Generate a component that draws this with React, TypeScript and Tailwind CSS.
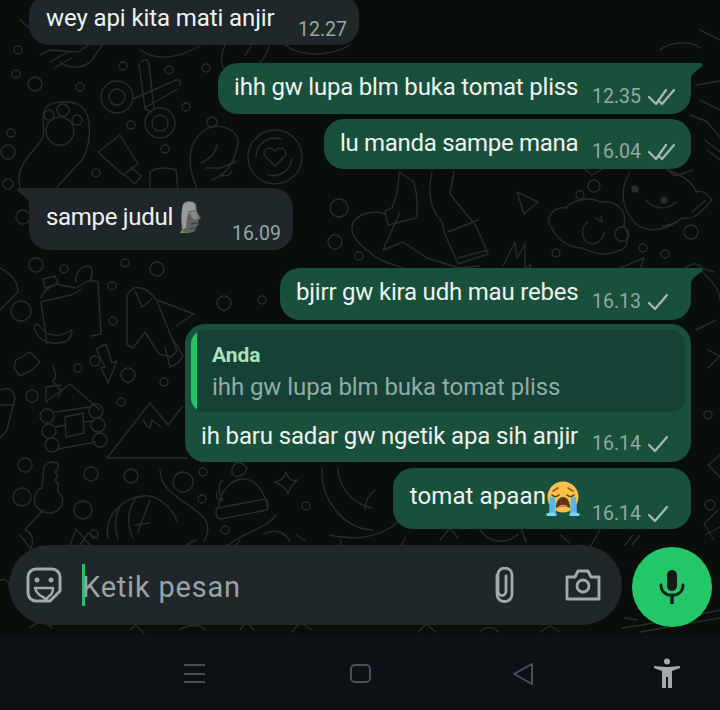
import React from 'react'

const dots: [number, number, number][] = [
  [18, 50, 4], [16, 74, 4], [35, 84, 7], [80, 87, 4], [123, 66, 4], [169, 70, 4], [206, 68, 4], [186, 107, 4],
  [131, 125, 4], [212, 122, 5], [165, 149, 4], [96, 173, 4], [11, 133, 4], [8, 152, 7], [8, 184, 5], [23, 217, 7],
  [36, 265, 7], [64, 269, 4], [125, 263, 4], [157, 269, 7], [112, 286, 4], [21, 311, 10], [113, 321, 4], [224, 303, 7],
  [262, 300, 4], [78, 368, 4], [128, 375, 7], [95, 361, 5], [164, 382, 4], [32, 396, 6], [121, 402, 4], [22, 497, 9],
  [25, 465, 7], [91, 474, 7], [131, 476, 7], [83, 510, 9], [94, 534, 4], [203, 472, 4], [183, 482, 10], [202, 499, 4],
  [306, 506, 4], [225, 530, 4], [339, 208, 9], [335, 242, 7], [359, 256, 4], [580, 195, 4], [594, 186, 6], [622, 234, 7],
  [556, 253, 4], [643, 248, 4], [691, 232, 7], [665, 254, 4], [710, 505, 5], [708, 415, 4],
]

// faint line drawings behind the chat
function Doodles() {
  return (
    <svg className="absolute left-0 top-0" width="720" height="635" viewBox="0 0 720 635" fill="none" stroke="#292d2a" strokeWidth="1.4" strokeLinecap="round" strokeLinejoin="round">
      {dots.map(([x, y, r], i) => <circle key={i} cx={x} cy={y} r={r} />)}
      {/* scissors */}
      <circle cx="117" cy="97" r="16" /><circle cx="117" cy="97" r="8" />
      <circle cx="160" cy="123" r="15" /><circle cx="160" cy="123" r="8" />
      <path d="M141 62c4-4 8-2 8 3l5 44M139 64l6 45 6 3M180 85c2-5-2-6-6-4l-41 18M178 89l-32 18" />
      {/* paw */}
      <circle cx="60" cy="131" r="14" /><circle cx="49" cy="115" r="5" /><circle cx="63" cy="110" r="6" /><circle cx="77" cy="120" r="5" />
      <path d="M20 187c-6-24 18-38 23-50 2-12-2-20 2-28 5-8 24-10 36-3 12 10 10 36 2 53l-26 28" />
      {/* tube */}
      <path d="M98 152l22-17 18 29-15 11zM125 175l10 9 6-8-10-9" />
      {/* head with glasses */}
      <path d="M198 190c-10-20-14-48 10-62 18-6 32 6 30 16 -4 18-10 30-26 36M217 145c-2 10-8 14-16 18M206 168h14l16-6M220 175c6 2 10 0 12-4" />
      <path d="M150 190v-18c8-6 20-4 26-2l2 20" />
      {/* coffee */}
      <circle cx="275" cy="157" r="27" />
      <path d="M256 156a19 19 0 0 1 25-17M292 158a19 19 0 0 1-24 17M275 166l-10-10c-4-6 5-11 10-5 5-6 14-1 10 5z" />
      <path d="M40 55l10-5 28 2 22-15-20-5M60 62c10 8 25 6 32-2l12-18M50 62l18-10M54 68l18-10" />
      <path d="M140 50c15 10 35 10 60-4M225 45c-8 20-3 30 18 30 10-4 24-16 26-30M245 55l6-8M285 45c15 12 45 12 65 0" />
      {/* bag and banana */}
      <path d="M43 279l12-3 3 8-13 4zM41 298c4-10 10-11 15-14l20 4 14-8 8 2 3 52-10 2M41 302l30-7 11-6M41 302l6 42" />
      <path d="M34 326c2 14 16 20 30 16 6-2 8-6 8-12-10 6-24 10-34-6zM76 282c-2-6 4-16 12-16 6 0 4 10 2 16" />
      {/* rocket */}
      <path d="M127 295c8-14 22-6 30 6l20 50-6 6-12-3-14-22-12 16-6-3zM135 291l7 16 10-8M157 300l37 14-18 12M165 347l5 20 8-4 5-7-10-17" />
      {/* lightning and blob */}
      <path d="M96 349l10-5 6 19 5-2-9 22-7-15 4-1zM16 360l14-8 10 10-8 8-12 6-6-8zM53 365l3 12-3 4 8 10-3 6" />
      {/* cabin */}
      <path d="M47 401l23-17 30 26M46 387v16M47 387l14-2" />
      <circle cx="47" cy="416" r="7" /><circle cx="49" cy="431" r="7" /><circle cx="52" cy="445" r="7" />
      <circle cx="96" cy="411" r="7" /><circle cx="98" cy="425" r="7" /><circle cx="100" cy="440" r="7" />
      <path d="M65 417l18-4 1 20-18 4zM55 412l36-5M56 427l10-2M84 422l10-1M58 449l38-7" />
      <path d="M0 390c10-4 14 2 15 8l-8 32-7 8M0 405h14" />
      {/* mountain */}
      <path d="M107 458l43-55 18 22 14-18M107 458h80M143 420l4 6 3 2 2-8 8 6M0 268c12 6 18 14 18 24l-18 18" />
      {/* key */}
      <path d="M50 462l8 1v6l-3 3 3 4-3 4 3 4v8c6 4 6 12 2 16-8 8-18 6-24-2-4-8 0-16 6-18l2-22zM43 510l-18 20M25 530c10 4 10 18 0 25" />
      {/* curved line, shrimp */}
      <path d="M160 470c0 24 30 32 44 48 6 8 4 17 0 23M108 538c-4-22 14-40 35-42 14-2 30 12 34 26M136 498c-8 10-10 26-3 40M121 505c-6 10-7 22-3 34M150 500l-12 32M135 525l14-2" />
      <path d="M70 545l6-16 14 16" />
      {/* beanie, star */}
      <path d="M223 480c-5 2-5 14 0 20-6 0-7-2-6-8M219 507c0-14 12-28 24-28s22 12 24 28M218 508l47-9c4 0 4 8 2 11l-46 9c-6 0-6-10-3-11z" />
      <path d="M232 468l5-6 6 2 4 4-3 6-7 3-5-3z" />
      <path d="M274 482c6 0 10-4 12-10 2 6 4 10 12 8-6 4-8 8-10 14-2-6-8-10-14-12z" />
      <path d="M322 468c-2 30 20 60 50 62M338 468c0 18 14 36 34 40M375 490c-8 6-10 14-10 20M400 520c-20 20-50 20-70 15M276 515c-10 14-30 16-48 30M264 534c10-6 22-2 26 8" />
      {/* boot */}
      <path d="M399 172c0 12-3 26-7 36l-7 3 3 14 28-7c2-6 2-20-2-36zM400 212l-17 38 20-8 24 16 32 10 20-2M385 214c-8-4-32-2-33 14-1 10 12 20 20 26 10 10 26 10 40 18M432 172c-4 16-2 30 2 38 4 10 10 10 10 22l14 32 30-10-12-28-26-32 4-22M448 232l30-12M458 258l30-8" />
      <path d="M503 266l12-24 2 16 8-14v24l6-4-6 22" />
      <path d="M517 192l7 22 14-12z" />
      {/* cloud */}
      <path d="M552 228c-8-8 0-22 14-20 6-8 24-12 34-6 14-2 28 6 24 24 6 8 4 24-4 24-16 8-28 2-38-2-14 0-26-10-30-20z" />
      <path d="M588 222c-8 4-8 20 4 22 6 0 12-6 12-12M596 218l6 4-1-6" />
      {/* cup with face */}
      <path d="M630 172c-10 16-10 36 6 52 14 10 32 6 46-6 10 2 16-2 30-18-4-6-10-10-16-8-2-8-12-16-28-22M646 200c8 10 22 10 30 2M662 226c4 0 12-2 20-8M692 212l14-12" />
      <circle cx="635" cy="189" r="3" fill="#292d2a" /><circle cx="664" cy="200" r="3" fill="#292d2a" />
      <path d="M707 150l13 10M705 140l15 12M620 268l24-10-8 22-16-12M684 272c4-10 14-10 18-4l12 4M700 270c12 10 20 20 20 30" />
      <path d="M696 330l20-10M708 350l12 6-12 12M720 455l-12 10 12 12M718 510l-14 14 10 16" />
      <path d="M665 168l10 8 18-6M580 165l12 10 14-8M690 115l16 6 14 16M700 100l20 10M696 85l24-4M700 30l20 10M660 50c10-8 30-10 40-2" />
      <path d="M230 20l16 18M60 10L44 40 20 20" />
      {/* doodles around the input */}
      <path d="M20 535l14 18M80 545l8-12 10 6M196 540c-8 2-12 8-12 10M240 540l-6 8M296 535l10 6M340 540l4 10M405 538l-5 10M440 540l10-12 8 10M480 530c10 14 28 14 38 4M518 520l8 22M560 535l10 8M600 530l-14 24M640 535l-8 10M705 535l15-8M0 580c6-2 10 2 9 8M625 545l8-10M625 618l12 2M640 632l80-14M622 628c16-2 60-10 98-18" />
      <path d="M30 628c8-8 18-6 22 0M130 630l6-5 8 8M180 630c8-6 20-6 26 0M240 630l6-8 8 8M292 632l8-10 12 8M418 632l8-8 10 8M480 632c4-6 14-6 18 0M540 632l10-6 10 6" />
    </svg>
  )
}

function DoubleCheck() {
  return (
    <svg width="27" height="20" viewBox="0 0 27 20" fill="none" stroke="#a9b9b2" strokeWidth="2.200" strokeLinecap="round" strokeLinejoin="round">
      <path d="M1 10l7 7L18 3M12 15l2 2L26 3" />
    </svg>
  )
}

function Check() {
  return (
    <svg width="20" height="20" viewBox="0 0 20 20" fill="none" stroke="#a9b9b2" strokeWidth="2.200" strokeLinecap="round" strokeLinejoin="round">
      <path d="M1 11l6 6L19 3" />
    </svg>
  )
}

function Moai() {
  return (
    <svg width="22" height="34" viewBox="0 0 22 34" className="ml-[6px] shrink-0">
      <path d="M1 33l5-9 4 9z" fill="#6f9e3c" />
      <path d="M4 4C7 0 14 0 17 4l1 8 4 6-3 3 1 3-3 3-1 4c-4 2-10 2-13 0C2 24 2 12 4 4z" fill="#5f625e" />
      <path d="M4 5c3-4 9-4 12-1l1 6-7 1c-2 4-2 10-3 16l-3 3C2 22 2 12 4 5z" fill="#989b97" />
      <path d="M10 12l7-1 3 7-5 2c-2-2-4-5-5-8z" fill="#858884" />
      <path d="M12 24l7-1M10 29l6-1" stroke="#383b38" strokeWidth="1.200" />
    </svg>
  )
}

function CryEmoji() {
  return (
    <svg width="36" height="36" viewBox="0 0 36 36" className="-ml-[1px] shrink-0 translate-y-[3px]">
      <circle cx="18" cy="16" r="15.500" fill="#fbbf4a" />
      <path d="M8 10l5-3M28 10l-5-3" stroke="#8a5a22" strokeWidth="1.600" strokeLinecap="round" />
      <path d="M7 14c2 2 5 2 7 0M22 14c2 2 5 2 7 0" stroke="#5a3c1c" strokeWidth="1.600" fill="none" strokeLinecap="round" />
      <path d="M11 27c0-7 3-11 7-11s7 4 7 11c-4-2-10-2-14 0z" fill="#5b3518" />
      <path d="M13 26c2-3 8-3 10 0-3-1-7-1-10 0z" fill="#f08a6a" />
      <path d="M5 16h5l1 16H4zM26 16h5l1 16h-7z" fill="#54b8ea" />
      <path d="M1 33c3-2 8-2 11 0l-1 2H2zM24 33c3-2 8-2 11 0l-1 2h-9z" fill="#7fd4f5" />
    </svg>
  )
}

function Meta({ time, read, sent }: { time: string; read?: boolean; sent?: boolean }) {
  return (
    <div className="flex shrink-0 items-center gap-[8px] self-end text-[19.500px] leading-[24px] text-[#95a8a0]">
      <span className="w-[48px] whitespace-nowrap">{time}</span>
      {read && <DoubleCheck />}
      {sent && <span className="pr-[7px]"><Check /></span>}
    </div>
  )
}

function TailRight() {
  return (
    <svg className="absolute right-[-12px] top-0" width="13" height="18" viewBox="0 0 13 18">
      <path d="M0 0h10c2.500 0 3.500 2 2 3.500C8 7 1 10 0 18z" fill="#18503c" />
    </svg>
  )
}

function TailLeft() {
  return (
    <svg className="absolute left-[-12px] top-0" width="13" height="18" viewBox="0 0 13 18">
      <path d="M13 0H3C.5 0-.5 2 1 3.500 5 7 12 10 13 18z" fill="#1f272b" />
    </svg>
  )
}

export default function App() {
  return (
    <div className="flex h-[710px] w-[720px] flex-col overflow-hidden bg-[#0a0e0b] font-['Roboto',sans-serif] text-[24px] text-[#eef3f1]">
      <div className="relative flex h-[635px] flex-col">
        <Doodles />

        <div className="relative flex h-[545px] flex-col pl-[29px] pr-[29px]">
          {/* incoming */}
          <div className="-mt-[5px] flex h-[50px] w-[330px] items-start self-start rounded-[20px] bg-[#1f272b] pb-[3px] pl-[17px] pr-[13px] pt-[7px]">
            <span className="flex-1 whitespace-nowrap leading-[32px] tracking-[-0.1px]">wey api kita mati anjir</span>
            <Meta time="12.27" />
          </div>

          <div className="relative mt-[18px] flex h-[51px] items-start self-end rounded-[20px] rounded-tr-none bg-[#18503c] pb-[5px] pl-[16px] pr-[16px] pt-[8px]">
            <TailRight />
            <span className="mr-[14px] w-[344px] whitespace-nowrap leading-[32px] tracking-[-0.2px]">ihh gw lupa blm buka tomat pliss</span>
            <Meta time="12.35" read />
          </div>

          <div className="mt-[5px] flex h-[50px] items-start self-end rounded-[20px] bg-[#18503c] pb-[5px] pl-[16px] pr-[16px] pt-[8px]">
            <span className="mr-[14px] w-[238px] whitespace-nowrap leading-[32px] tracking-[-0.3px]">lu manda sampe mana</span>
            <Meta time="16.04" read />
          </div>

          <div className="relative mt-[19px] flex h-[62px] w-[264px] items-start self-start rounded-[20px] rounded-tl-none bg-[#1f272b] pb-[4px] pl-[17px] pr-[13px] pt-[12px]">
            <TailLeft />
            <span className="flex flex-1 items-center whitespace-nowrap leading-[32px] tracking-[-0.3px]">sampe judul<Moai /></span>
            <Meta time="16.09" />
          </div>

          <div className="relative mt-[18px] flex h-[52px] items-start self-end rounded-[20px] rounded-tr-none bg-[#18503c] pb-[6px] pl-[16px] pr-[16px] pt-[8px]">
            <TailRight />
            <span className="mr-[14px] w-[282px] whitespace-nowrap leading-[32px] tracking-[-0.2px]">bjirr gw kira udh mau rebes</span>
            <Meta time="16.13" sent />
          </div>

          {/* reply */}
          <div className="mt-[4px] flex h-[138px] w-[506px] flex-col self-end rounded-[20px] bg-[#18503c] p-[6px]">
            <div className="flex h-[82px] shrink-0 overflow-hidden rounded-[14px] bg-[#164136]">
              <div className="w-[6px] bg-[#25c268]" />
              <div className="pl-[15px] pt-[11px]">
                <div className="text-[21px] font-bold leading-[28px] text-[#a7e3bd]">Anda</div>
                <div className="mt-[2px] whitespace-nowrap text-[24px] leading-[32px] tracking-[-0.07px] text-[#93aba2]">ihh gw lupa blm buka tomat pliss</div>
              </div>
            </div>
            <div className="flex flex-1 items-start pl-[10px] pr-[10px] pt-[8px]">
              <span className="mr-[14px] w-[377px] whitespace-nowrap leading-[32px] tracking-[-0.15px]">ih baru sadar gw ngetik apa sih anjir</span>
              <Meta time="16.14" sent />
            </div>
          </div>

          <div className="mt-[6px] flex h-[61px] items-start self-end rounded-[20px] bg-[#18503c] pb-[3px] pl-[17px] pr-[16px] pt-[10px]">
            <span className="mr-[11px] flex items-center whitespace-nowrap leading-[36px] tracking-[0.1px]">tomat apaan<CryEmoji /></span>
            <Meta time="16.14" sent />
          </div>
        </div>

        {/* input row */}
        <div className="relative flex gap-[10px] pl-[9px]">
          <div className="flex h-[80px] w-[613px] items-center rounded-[40px] bg-[#1f272b]">
            <svg className="ml-[17px]" width="36" height="36" viewBox="0 0 36 36" fill="none" stroke="#a3aaad" strokeWidth="3" strokeLinejoin="round">
              <path d="M10 2h16a8 8 0 0 1 8 8v14L24 34H10a8 8 0 0 1-8-8V10a8 8 0 0 1 8-8z" />
              <path d="M9 21h18c0 5-3 8-5 9l-2 3c-2-3-3-3-5-4-3-2-5-4-6-8z" strokeWidth="2.500" />
              <circle cx="11" cy="13" r="2.500" fill="#a3aaad" stroke="none" /><circle cx="25" cy="13" r="2.500" fill="#a3aaad" stroke="none" />
            </svg>
            <div className="ml-[20px] h-[42px] w-[3px] bg-[#25c268]" />
            <span className="-ml-[3px] flex-1 pt-[6px] text-[29px] tracking-[0.8px] text-[#9aa3a6]">Ketik pesan</span>
            <svg className="mr-[50px]" width="24" height="36" viewBox="0 0 24 36" fill="none" stroke="#a3aaad" strokeWidth="2.800" strokeLinecap="round">
              <path d="M6 8v19c0 10 15 10 15 0V8C21-1 7-1 7 7v17c0 6 8 6 8 0V9" />
            </svg>
            <svg className="mr-[21px]" width="36" height="32" viewBox="0 0 36 32" fill="none" stroke="#a3aaad" strokeWidth="2.800" strokeLinejoin="round">
              <path d="M2 8h8l3-6h10l3 6h8v22H2z" />
              <circle cx="18" cy="17" r="6" />
            </svg>
          </div>
          <div className="mt-[2px] flex h-[80px] w-[80px] items-center justify-center rounded-full bg-[#24c768]">
            <svg width="26" height="34" viewBox="0 0 26 34" fill="none">
              <rect x="8" y="0" width="10" height="21" rx="5" fill="#14191c" />
              <path d="M2 15c0 14 22 14 22 0" stroke="#14191c" strokeWidth="2.800" strokeLinecap="round" />
              <path d="M13 25v8" stroke="#14191c" strokeWidth="3.500" strokeLinecap="round" />
            </svg>
          </div>
        </div>
      </div>

      {/* android nav bar */}
      <div className="relative flex h-[75px] items-start bg-[#0d1116] pt-[29px]">
        <div className="ml-[184px] flex h-[19px] w-[21px] flex-col justify-between">
          <div className="h-[2px] bg-[#4a4f54]" /><div className="h-[2px] bg-[#4a4f54]" /><div className="h-[2px] bg-[#4a4f54]" />
        </div>
        <div className="ml-[145px] h-[19px] w-[21px] rounded-[5px] border-2 border-[#4a4f54]" />
        <svg className="-mt-[2px] ml-[141px]" width="22" height="24" viewBox="0 0 22 24" fill="none" stroke="#4a4f54" strokeWidth="2" strokeLinejoin="round">
          <path d="M2 12L20 2v20z" />
        </svg>
        <svg className="-mt-[6px] ml-[119px]" width="28" height="30" viewBox="0 0 28 30" fill="#a6a8aa">
          <circle cx="14" cy="3.500" r="3" />
          <path d="M1 8l12 1h2l12-1v2l-8 3v17h-4v-11h-2v11h-4V13L1 10z" />
        </svg>
      </div>
    </div>
  )
}
